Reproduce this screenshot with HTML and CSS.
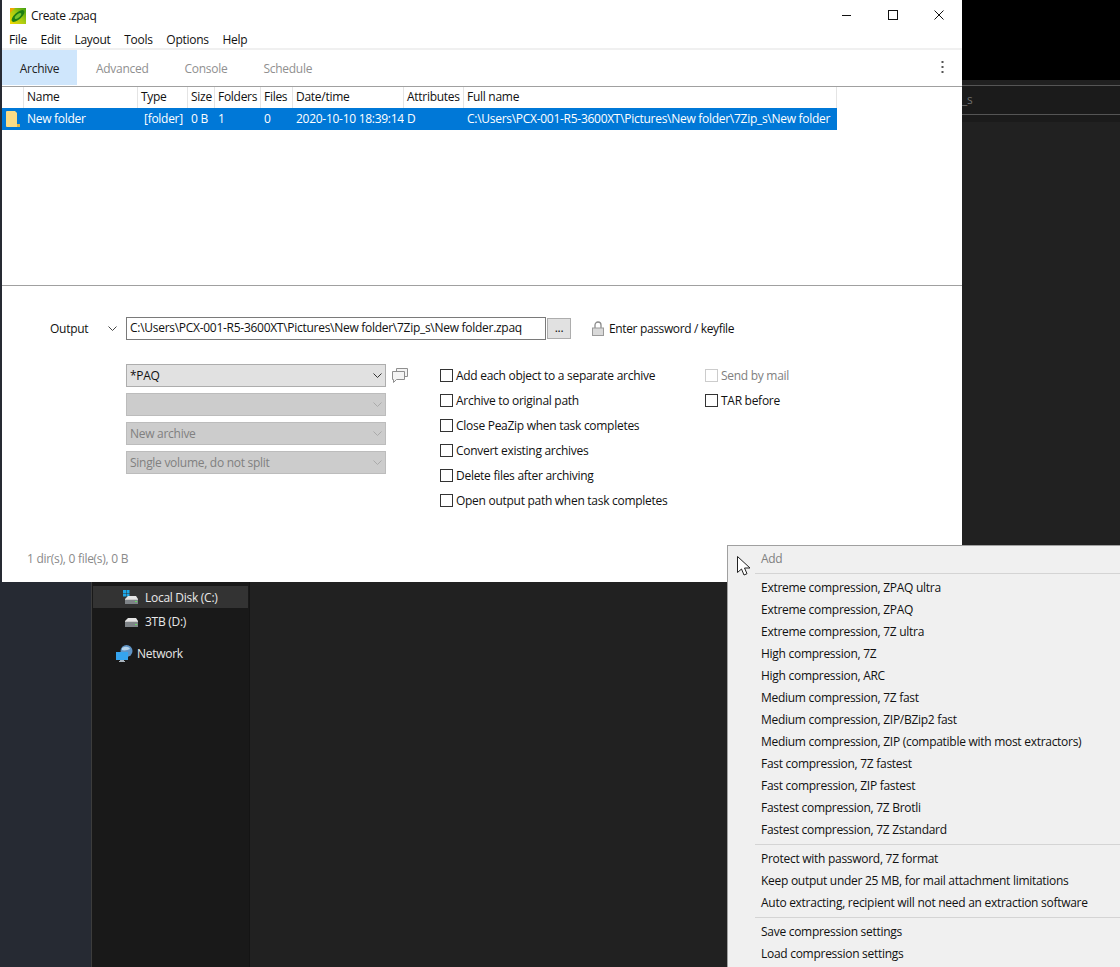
FILE: index.html
```html
<!DOCTYPE html>
<html lang="en">
<head>
    <meta charset="UTF-8">
    <title>Create .zpaq</title>
    <link rel="stylesheet" href="styles.css">
</head>
<body>
    <div class="desktop">
        <!-- dark explorer window behind -->
        <div class="explorer">
            <div class="explorer-top"></div>
            <div class="explorer-tabs"><span class="explorer-tab-text">_s</span></div>
            <div class="explorer-strip"></div>
            <div class="explorer-body"></div>
        </div>
        <div class="nav-left"></div>
        <div class="nav">
            <div class="nav-row nav-row-active">
                <svg class="nav-icon" width="16" height="14" viewBox="0 0 16 14"><rect x="0" y="0" width="3" height="3" fill="#1ea7e8"/><rect x="3.500" y="0" width="3" height="3" fill="#1ea7e8"/><rect x="0" y="3.500" width="3" height="3" fill="#1ea7e8"/><rect x="3.500" y="3.500" width="3" height="3" fill="#1ea7e8"/><path d="M5 6h8l2 3H2z" fill="#e4e4e4"/><rect x="2" y="9" width="13" height="5" fill="#7f8488"/><rect x="2" y="9" width="13" height="1" fill="#c9c9c9"/><rect x="12" y="11" width="2" height="1" fill="#5fe05f"/></svg>
                <span>Local Disk (C:)</span>
            </div>
            <div class="nav-row">
                <svg class="nav-icon" width="16" height="14" viewBox="0 0 16 14"><path d="M5 4h8l2 3H2z" fill="#e4e4e4"/><rect x="2" y="7" width="13" height="6" fill="#7f8488"/><rect x="2" y="7" width="13" height="1" fill="#c9c9c9"/><rect x="12" y="10" width="2" height="1" fill="#5fe05f"/></svg>
                <span>3TB (D:)</span>
            </div>
            <div class="nav-row nav-row-net">
                <svg class="nav-icon" width="17" height="17" viewBox="0 0 17 17"><circle cx="10.500" cy="6" r="6" fill="#5f93c4"/><path d="M6 3c3-2 7-1.500 8 1-2 1-6 2-8 1z" fill="#b5d3ea"/><rect x="0" y="7" width="12" height="8" fill="#35a4ee"/><rect x="4" y="15" width="4" height="1" fill="#a9b4bd"/><rect x="3" y="16" width="6" height="1" fill="#a9b4bd"/></svg>
                <span>Network</span>
            </div>
        </div>

        <!-- main PeaZip window -->
        <div class="window">
            <div class="titlebar">
                <svg class="app-icon" width="16" height="16" viewBox="0 0 16 16">
                    <defs><linearGradient id="peabg" x1="0" y1="1" x2="1" y2="0"><stop offset="0" stop-color="#f7d900"/><stop offset="0.5" stop-color="#a8cc12"/><stop offset="1" stop-color="#3f9f10"/></linearGradient></defs>
                    <rect width="16" height="16" fill="url(#peabg)"/>
                    <path d="M0 0h5L0 5z" fill="#f2a400"/>
                    <ellipse cx="8" cy="8" rx="8" ry="3.500" transform="rotate(-42 8 8)" fill="#1d7d14"/>
                    <ellipse cx="8" cy="8" rx="4" ry="1.800" transform="rotate(-42 8 8)" fill="#77c62e"/>
                </svg>
                <span class="title">Create .zpaq</span>
                <div class="winbtns">
                    <svg width="10" height="10" viewBox="0 0 10 10"><path d="M0 5.500h9" stroke="#111" fill="none"/></svg>
                    <svg width="10" height="10" viewBox="0 0 10 10"><rect x="0.500" y="0.500" width="9" height="9" stroke="#111" fill="none"/></svg>
                    <svg width="10" height="10" viewBox="0 0 10 10"><path d="M0.500 0.500l9 9M9.500 0.500l-9 9" stroke="#111" fill="none"/></svg>
                </div>
            </div>
            <div class="menubar">
                <span>File</span><span>Edit</span><span>Layout</span><span>Tools</span><span>Options</span><span>Help</span>
            </div>
            <div class="tabbar">
                <span class="tab tab-active">Archive</span>
                <span class="tab tab-advanced">Advanced</span>
                <span class="tab tab-console">Console</span>
                <span class="tab tab-schedule">Schedule</span>
                <svg class="kebab" width="3" height="13" viewBox="0 0 3 13"><rect x="0.500" y="0" width="2" height="2" fill="#555"/><rect x="0.500" y="5" width="2" height="2" fill="#555"/><rect x="0.500" y="10" width="2" height="2" fill="#555"/></svg>
            </div>
            <div class="filelist">
                <div class="row row-head">
                    <span></span><span>Name</span><span>Type</span><span>Size</span><span>Folders</span><span>Files</span><span>Date/time</span><span>Attributes</span><span>Full name</span>
                </div>
                <div class="row row-selected">
                    <span class="cell-icon"><svg width="14" height="16" viewBox="0 0 14 16"><path d="M0 1q0-1 1-1h8l2 2v11h3v3H1q-1 0-1-1z" fill="#fbdc86"/><path d="M11 13v3h3v-3z" fill="#e2b545"/></svg></span>
                    <span>New folder</span><span>[folder]</span><span>0 B</span><span>1</span><span>0</span><span>2020-10-10 18:39:14</span><span>D</span><span>C:\Users\PCX-001-R5-3600XT\Pictures\New folder\7Zip_s\New folder</span>
                </div>
            </div>
            <div class="options">
                <div class="output-row">
                    <span class="output-label">Output</span>
                    <svg class="chev output-chev" width="9" height="5" viewBox="0 0 9 5"><path d="M0.500 0.500l4 4 4-4" stroke="#444" fill="none"/></svg>
                    <div class="path-input">C:\Users\PCX-001-R5-3600XT\Pictures\New folder\7Zip_s\New folder.zpaq</div>
                    <div class="browse">...</div>
                    <svg class="lock" width="12" height="15" viewBox="0 0 12 15"><path d="M3 7V4a3 3 0 0 1 6 0v3" stroke="#8b8b8b" stroke-width="1.300" fill="none"/><rect x="0.500" y="7" width="11" height="7.500" fill="#d9d9d9" stroke="#9a9a9a"/></svg>
                    <span class="password">Enter password / keyfile</span>
                </div>
                <div class="settings">
                    <div class="combos">
                        <div class="combo-line">
                            <div class="combo combo-on"><span>*PAQ</span><svg width="9" height="5" viewBox="0 0 9 5"><path d="M0.500 0.500l4 4 4-4" stroke="#333" fill="none"/></svg></div>
                            <svg class="comment" width="16" height="16" viewBox="0 0 16 16"><path d="M4.500 3.500v-3h11v8h-3" stroke="#8f8f8f" fill="#f4f4f4"/><path d="M0.500 3.500h12v8h-8l-3 3v-3h-1z" stroke="#8f8f8f" fill="#f4f4f4"/></svg>
                        </div>
                        <div class="combo"><span></span><svg width="9" height="5" viewBox="0 0 9 5"><path d="M0.500 0.500l4 4 4-4" stroke="#aaa" fill="none"/></svg></div>
                        <div class="combo"><span>New archive</span><svg width="9" height="5" viewBox="0 0 9 5"><path d="M0.500 0.500l4 4 4-4" stroke="#aaa" fill="none"/></svg></div>
                        <div class="combo"><span>Single volume, do not split</span><svg width="9" height="5" viewBox="0 0 9 5"><path d="M0.500 0.500l4 4 4-4" stroke="#aaa" fill="none"/></svg></div>
                    </div>
                    <div class="checks">
                        <label class="check"><i></i>Add each object to a separate archive</label>
                        <label class="check"><i></i>Archive to original path</label>
                        <label class="check"><i></i>Close PeaZip when task completes</label>
                        <label class="check"><i></i>Convert existing archives</label>
                        <label class="check"><i></i>Delete files after archiving</label>
                        <label class="check"><i></i>Open output path when task completes</label>
                    </div>
                    <div class="checks">
                        <label class="check check-off"><i></i>Send by mail</label>
                        <label class="check"><i></i>TAR before</label>
                    </div>
                </div>
                <div class="status">1 dir(s), 0 file(s), 0 B</div>
            </div>
        </div>

        <!-- popup menu -->
        <div class="popup">
            <div class="item item-off">Add</div>
            <div class="sep"></div>
            <div class="item">Extreme compression, ZPAQ ultra</div>
            <div class="item">Extreme compression, ZPAQ</div>
            <div class="item">Extreme compression, 7Z ultra</div>
            <div class="item">High compression, 7Z</div>
            <div class="item">High compression, ARC</div>
            <div class="item">Medium compression, 7Z fast</div>
            <div class="item">Medium compression, ZIP/BZip2 fast</div>
            <div class="item">Medium compression, ZIP (compatible with most extractors)</div>
            <div class="item">Fast compression, 7Z fastest</div>
            <div class="item">Fast compression, ZIP fastest</div>
            <div class="item">Fastest compression, 7Z Brotli</div>
            <div class="item">Fastest compression, 7Z Zstandard</div>
            <div class="sep"></div>
            <div class="item">Protect with password, 7Z format</div>
            <div class="item">Keep output under 25 MB, for mail attachment limitations</div>
            <div class="item">Auto extracting, recipient will not need an extraction software</div>
            <div class="sep"></div>
            <div class="item">Save compression settings</div>
            <div class="item">Load compression settings</div>
        </div>

        <svg class="cursor" width="14" height="20" viewBox="0 0 14 20"><path d="M0.500 0.500v16l4-3.500 2.500 6 3-1.300-2.500-5.700h5.500z" fill="#fff" stroke="#222"/></svg>
    </div>
</body>
</html>
```

FILE: styles.css
```css
* {
    box-sizing: border-box;
}
html, body {
    margin: 0;
    padding: 0;
}
body {
    font-family: "Open Sans", "Noto Sans", sans-serif;
    font-size: 12px;
    letter-spacing: -0.28px;
    color: #111;
}
.desktop {
    position: relative;
    width: 1120px;
    height: 967px;
    overflow: hidden;
    background-color: #262a33;
}

/* things behind the main window */
.explorer {
    position: absolute;
    left: 250px;
    top: 0;
    right: 0;
    bottom: 0;
    display: flex;
    flex-direction: column;
    background-color: #202020;
}
.explorer-top {
    height: 80px;
    background-color: #000;
}
.explorer-tabs {
    height: 30px;
    margin-top: 5px;
    padding-left: 712px;
    border-top: 1px solid #555;
    border-bottom: 1px solid #555;
    background-color: #1b1b1b;
    color: #6e6e6e;
    line-height: 28px;
}
.explorer-strip {
    height: 7px;
    background-color: #1b1b1b;
}
.explorer-body {
    flex: 1;
    background-color: #212121;
}
.nav-left {
    position: absolute;
    left: 91px;
    top: 580px;
    bottom: 0;
    width: 1px;
    background-color: #3c3c3c;
}
.nav {
    position: absolute;
    left: 92px;
    top: 0;
    bottom: 0;
    width: 158px;
    padding: 586px 1px 0 1px;
    background-color: #191919;
    border-right: 1px solid #141414;
    color: #e8e8e8;
}
.nav-row {
    display: flex;
    align-items: center;
    gap: 5px;
    height: 22px;
    margin-bottom: 2px;
    padding-left: 30px;
}
.nav-row span {
    margin-left: 1px;
}
.nav-row-active {
    background-color: #333;
}
.nav-row-net {
    margin-top: 10px;
    gap: 3px;
    padding-left: 23px;
}

/* main window */
.window {
    position: absolute;
    left: 2px;
    top: 0;
    width: 960px;
    height: 582px;
    display: flex;
    flex-direction: column;
    background-color: #fff;
}
.titlebar {
    display: flex;
    align-items: center;
    height: 30px;
    padding-left: 8px;
    padding-top: 1px;
}
.title {
    margin-left: 5px;
    letter-spacing: -0.4px;
}
.winbtns {
    display: flex;
    gap: 36px;
    margin-left: auto;
    padding-right: 18px;
    padding-bottom: 2px;
}
.menubar {
    display: flex;
    gap: 13.700px;
    height: 18px;
    padding-left: 7px;
    line-height: 20px;
}
.tabbar {
    position: relative;
    display: flex;
    height: 39px;
    border-top: 2px solid #f0f0f0;
    border-bottom: 1px solid #a0a0a0;
}
.tab {
    line-height: 37px;
    color: #909090;
}
.tab-active {
    width: 75px;
    height: 35px;
    background-color: #cfe6fc;
    color: #222;
    text-align: center;
}
.tab-advanced {
    margin-left: 19px;
}
.tab-console {
    margin-left: 36px;
}
.tab-schedule {
    margin-left: 36px;
}
.kebab {
    position: absolute;
    right: 18px;
    top: 11px;
}
.filelist {
    height: 199px;
    border-bottom: 1px solid #a0a0a0;
}
.row {
    display: grid;
    grid-template-columns: 22px 114px 50px 27px 46px 32px 111px 60px 373px;
    width: 835px;
    height: 22px;
    line-height: 22px;
    white-space: nowrap;
}
.row span {
    padding-left: 3px;
    overflow: hidden;
}
.row-head {
    height: 21px;
    line-height: 20px;
}
.row-head span {
    border-right: 1px solid #e4e4e4;
}
.row-selected {
    background-color: #0078d7;
    color: #fff;
}
.row-selected span:nth-child(3) {
    padding-left: 6px;
}
.row-selected .cell-icon {
    padding-left: 4px;
}
.cell-icon {
    display: flex;
    align-items: center;
}
.options {
    flex: 1;
    position: relative;
    padding: 31px 0 0 48px;
}
.output-row {
    display: flex;
    align-items: center;
    height: 23px;
}
.output-label {
    width: 58px;
}
.output-chev {
    margin-right: 9px;
}
.path-input {
    width: 420px;
    height: 23px;
    padding-left: 3px;
    border: 1px solid #7a7a7a;
    line-height: 20px;
    white-space: nowrap;
    overflow: hidden;
}
.browse {
    width: 24px;
    height: 21px;
    margin-left: 1px;
    border: 1px solid #adadad;
    background-color: #e1e1e1;
    line-height: 18px;
    text-align: center;
}
.lock {
    margin: 0 5px 0 21px;
}
.password {
    letter-spacing: -0.36px;
}
.settings {
    display: flex;
    padding: 24px 0 0 76px;
}
.combos {
    display: flex;
    flex-direction: column;
    flex-shrink: 0;
    gap: 6px;
    width: 314px;
}
.combo-line {
    display: flex;
    gap: 6px;
}
.combo {
    display: flex;
    align-items: center;
    justify-content: space-between;
    width: 260px;
    height: 23px;
    padding: 0 3px 0 3px;
    border: 1px solid #bcbcbc;
    background-color: #ccc;
    color: #808080;
}
.combo-on {
    border-color: #adadad;
    background-color: #e1e1e1;
    color: #111;
}
.comment {
    margin-top: 4px;
}
.checks {
    display: flex;
    flex-direction: column;
    flex-shrink: 0;
    gap: 7px;
    width: 265px;
    padding-top: 2px;
}
.check {
    display: flex;
    align-items: center;
    gap: 3px;
    height: 18px;
    white-space: nowrap;
}
.check i {
    width: 13px;
    height: 13px;
    border: 1px solid #333;
}
.check-off {
    color: #808080;
}
.check-off i {
    border-color: #ccc;
}
.status {
    position: absolute;
    left: 25px;
    top: 264px;
    color: #8a8a8a;
}

/* popup */
.popup {
    position: absolute;
    left: 727px;
    top: 545px;
    right: -2px;
    bottom: -2px;
    padding: 2px 0 0 33px;
    border: 1px solid #a0a0a0;
    background-color: #f0f0f0;
}
.item {
    height: 22px;
    line-height: 22px;
    white-space: nowrap;
}
.item-off {
    color: #808080;
}
.sep {
    height: 1px;
    margin: 3px 0 3px -6px;
    background-color: #d4d4d4;
}
.cursor {
    position: absolute;
    left: 737px;
    top: 556px;
}
```
